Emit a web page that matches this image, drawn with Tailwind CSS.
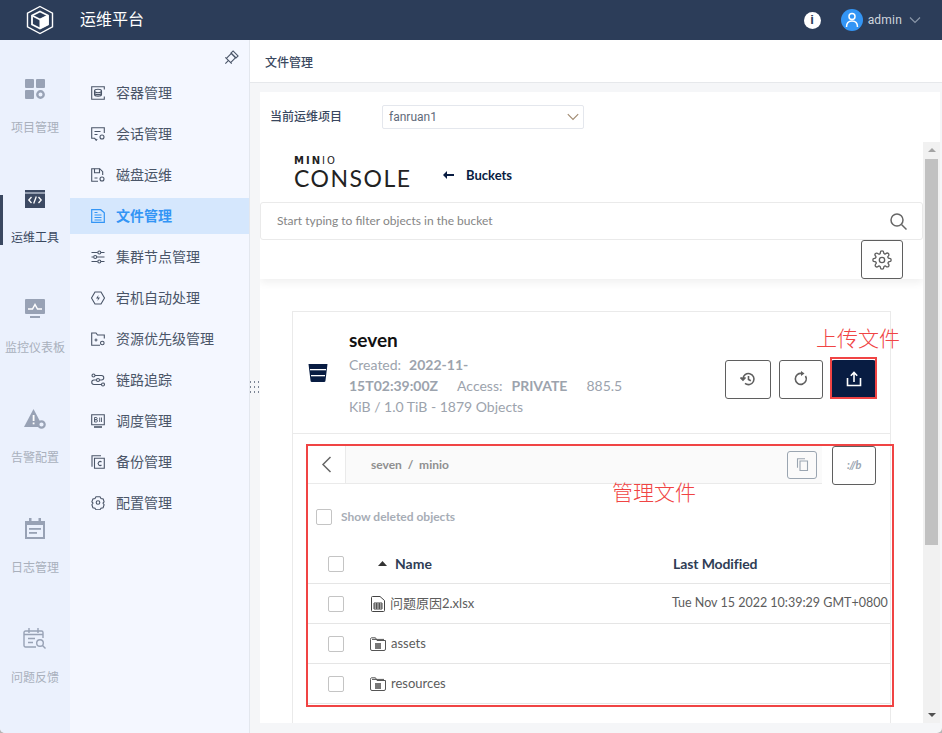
<!DOCTYPE html>
<html lang="zh-CN" class="bg-[#b5b5b5]">
<head>
  <meta charset="UTF-8" />
  <meta name="viewport" content="width=device-width, initial-scale=1.0"/>
  <title>运维平台</title>
  <script src="https://cdn.jsdelivr.net/npm/@tailwindcss/browser@4"></script>
</head>
<body class="relative h-[733px] w-[942px] overflow-hidden rounded-b-[5px] bg-[#f5f6f8] font-['Roboto','Noto_Sans_CJK_SC',sans-serif]">

  <!-- top bar -->
  <header class="flex h-10 items-center bg-[#2c3d59] text-white">
    <svg class="ml-[26px] h-[30px] w-[28px]" viewBox="0 0 28 30" fill="none" stroke="#fff">
      <path d="M14 1.500 26.500 8.200v13.600L14 28.500 1.500 21.800V8.200z" stroke-width="1.400"/>
      <path d="M14 6.500 22 10.500v9L14 23.500 6 19.500v-9z" stroke-width="1.800"/>
      <path d="M6 10.500 14 14.500 22 10.500" stroke-width="1.600"/>
      <path d="M14 14.500 22 10.500v9L14 23.500z" fill="#fff"/>
    </svg>
    <span class="ml-[26px] text-base">运维平台</span>
    <div class="ml-auto flex items-center">
      <span class="flex h-[17px] w-[17px] items-center justify-center rounded-full bg-white font-['Liberation_Sans'] text-[13px] font-bold text-[#2c3d59]">i</span>
      <span class="ml-[20px] flex h-[22px] w-[22px] items-center justify-center rounded-full bg-[#3395f5]">
        <svg class="h-4 w-4" viewBox="0 0 16 16" fill="none" stroke="#fff" stroke-width="1.500"><circle cx="8" cy="4.500" r="3"/><path d="M2.500 15c0-4 2.200-6 5.500-6s5.500 2 5.500 6"/></svg>
      </span>
      <span class="ml-[5px] text-xs tracking-[0.2px] text-[#cfd5de]">admin</span>
      <svg class="ml-[7px] mr-[21px] h-2 w-3" viewBox="0 0 12 8" fill="none" stroke="#8a96a8" stroke-width="1.200"><path d="M1 1.500 6 6.500l5-5"/></svg>
    </div>
  </header>

  <div class="flex h-[693px]">
    <!-- icon rail -->
    <nav class="relative flex w-[70px] shrink-0 flex-col items-center bg-[#ebf1fd] pt-[38px] text-xs text-[#a9b0bc]">
      <span class="absolute left-0 top-[155px] h-[50px] w-[3px] bg-[#3a4860]"></span>

      <div class="flex h-[110px] shrink-0 flex-col items-center">
        <svg class="h-[22px] w-[22px]" viewBox="0 0 22 22" fill="#98a2b5"><rect x="1" y="1" width="9" height="9" rx="1"/><rect x="12" y="1" width="9" height="9" rx="1"/><rect x="1" y="12" width="9" height="9" rx="1"/><circle cx="16.500" cy="16.500" r="3.200" fill="none" stroke="#98a2b5" stroke-width="2.400"/></svg>
        <span class="mt-[20px]">项目管理</span>
      </div>
      <div class="flex h-[110px] shrink-0 flex-col items-center text-[#3a4860]">
        <svg class="h-[22px] w-[22px]" viewBox="0 0 22 22"><rect x="1" y="2" width="20" height="18" fill="#3d4a63"/><rect x="1" y="4.500" width="20" height="1" fill="#ebf1fd"/><path d="M7.500 9 4.800 12l2.700 3M14.500 9l2.700 3-2.700 3M12.300 8.500l-2.600 7" fill="none" stroke="#fff" stroke-width="1.300"/></svg>
        <span class="mt-[20px]">运维工具</span>
      </div>
      <div class="flex h-[110px] shrink-0 flex-col items-center">
        <svg class="h-[22px] w-[22px]" viewBox="0 0 22 22"><rect x="1" y="1" width="20" height="15" rx="1" fill="#98a2b5"/><path d="M4 11h4.500L11 6.500l2.500 4.500H18" fill="none" stroke="#fff" stroke-width="1.500"/><rect x="6" y="18" width="10" height="2" fill="#98a2b5"/></svg>
        <span class="mt-[20px]">监控仪表板</span>
      </div>
      <div class="flex h-[110px] shrink-0 flex-col items-center">
        <svg class="h-[22px] w-[24px]" viewBox="0 0 24 22"><path d="M10.500 1 20 19H1z" fill="#98a2b5"/><rect x="9.700" y="7" width="1.800" height="6" fill="#fff"/><rect x="9.700" y="14.500" width="1.800" height="1.800" fill="#fff"/><circle cx="18.500" cy="16.500" r="3.200" fill="#ebf1fd" stroke="#98a2b5" stroke-width="2.200"/></svg>
        <span class="mt-[20px]">告警配置</span>
      </div>
      <div class="flex h-[110px] shrink-0 flex-col items-center">
        <svg class="h-[22px] w-[22px]" viewBox="0 0 22 22"><path d="M1 3h20v18H1z" fill="#98a2b5"/><rect x="5" y="0" width="2.500" height="4" fill="#98a2b5"/><rect x="14.500" y="0" width="2.500" height="4" fill="#98a2b5"/><rect x="3" y="7" width="16" height="12" fill="#ebf1fd"/><rect x="5" y="10" width="12" height="1.800" fill="#98a2b5"/><rect x="5" y="14" width="8" height="1.800" fill="#98a2b5"/></svg>
        <span class="mt-[20px]">日志管理</span>
      </div>
      <div class="flex h-[110px] shrink-0 flex-col items-center">
        <svg class="h-[22px] w-[24px]" viewBox="0 0 24 22" fill="none" stroke="#98a2b5" stroke-width="1.400"><path d="M13 19H2.500A1.500 1.500 0 0 1 1 17.500V4.500A1.500 1.500 0 0 1 2.500 3h16A1.500 1.500 0 0 1 20 4.500V10"/><path d="M6 0v5M15 0v5M1 6.500h19M5 10.500h7M5 14.500h5"/><circle cx="17" cy="15" r="3.300"/><path d="m19.500 17.500 3 3"/></svg>
        <span class="mt-[20px]">问题反馈</span>
      </div>
    </nav>

    <!-- sub menu -->
    <aside class="relative w-[180px] shrink-0 border-r border-[#e3e7ee] bg-[#f4f7ff] pt-[35px] text-sm text-[#4a5568]">
      <svg class="absolute left-[153px] top-[10px] h-4 w-4" viewBox="0 0 16 16" fill="none" stroke="#4a5568" stroke-width="1.100"><g transform="rotate(45 8 8)"><path d="M4.500 4.500h7M5 4.500v7M11 4.500v7M3.500 11.500h9M8 11.500V16"/><path d="M4.500 1.500h7v3h-7z"/></g></svg>

      <ul class="flex flex-col gap-[5px]">
        <li class="flex h-9 items-center pl-[21px]">
          <svg class="mr-[11px] h-[14px] w-[14px]" viewBox="0 0 14 14" fill="none" stroke="#4a5568" stroke-width="1.100"><path d="M13.300 3.500V.7H.7v12.600h12.600v-2.800"/><ellipse cx="7" cy="5" rx="3.500" ry="1.700"/><path d="M3.500 5v3.500C3.500 9.500 5 10.200 7 10.200s3.500-.7 3.500-1.700V5M3.500 7c0 1 1.500 1.600 3.500 1.600S10.500 8 10.500 7"/></svg>
          容器管理
        </li>
        <li class="flex h-9 items-center pl-[21px]">
          <svg class="mr-[11px] h-[14px] w-[14px]" viewBox="0 0 14 14" fill="none" stroke="#4a5568" stroke-width="1.100"><path d="M13.300 6V.7H.7v10.600h3l1.500 2 1-1.300"/><path d="M3.500 4.500h6M3.500 7.500h3"/><circle cx="11" cy="10" r="2"/></svg>
          会话管理
        </li>
        <li class="flex h-9 items-center pl-[21px]">
          <svg class="mr-[11px] h-[14px] w-[14px]" viewBox="0 0 14 14" fill="none" stroke="#4a5568" stroke-width="1.100"><path d="M7 13.300H.7V.7h8l3 3V7"/><path d="M3.500 .7v4h5v-4M3.500 10h3"/><circle cx="11" cy="11" r="2"/></svg>
          磁盘运维
        </li>
        <li class="flex h-9 items-center bg-[#d5e7fd] pl-[21px] font-bold text-[#3395f5]">
          <svg class="mr-[11px] h-[14px] w-[14px]" viewBox="0 0 14 14" fill="none" stroke="#3395f5" stroke-width="1.200"><path d="M.7.7h9l3.600 3v9.600H.7z"/><path d="M3.500 6h7M3.500 8.500h7M3.500 11h7M3.500 3.500h3"/></svg>
          文件管理
        </li>
        <li class="flex h-9 items-center pl-[21px]">
          <svg class="mr-[11px] h-[14px] w-[14px]" viewBox="0 0 14 14" fill="none" stroke="#4a5568" stroke-width="1.100"><path d="M.5 2.500h6M10 2.500h3.500M.5 7h2M6 7h7.500M.5 11.500h6M10 11.500h3.500"/><circle cx="8.300" cy="2.500" r="1.500"/><circle cx="4.200" cy="7" r="1.500"/><circle cx="8.300" cy="11.500" r="1.500"/></svg>
          集群节点管理
        </li>
        <li class="flex h-9 items-center pl-[21px]">
          <svg class="mr-[11px] h-[14px] w-[14px]" viewBox="0 0 14 14" fill="none" stroke="#4a5568" stroke-width="1.100"><path d="M4 1h6l3.500 6-3.500 6H4L.5 7z"/><path d="M7.500 4 5 7.500h2l-.5 2.500L9 6.500H7z" fill="#4a5568" stroke="none"/></svg>
          宕机自动处理
        </li>
        <li class="flex h-9 items-center pl-[21px]">
          <svg class="mr-[11px] h-[14px] w-[14px]" viewBox="0 0 14 14" fill="none" stroke="#4a5568" stroke-width="1.100"><path d="M13.300 6.500V3H6.500L5 1H.7v12.300H9"/><circle cx="11.300" cy="11" r="1.800"/><path d="M3.500 8h3M5 6.500v3"/></svg>
          资源优先级管理
        </li>
        <li class="flex h-9 items-center pl-[21px]">
          <svg class="mr-[11px] h-[14px] w-[14px]" viewBox="0 0 14 14" fill="none" stroke="#4a5568" stroke-width="1.100"><circle cx="2.500" cy="2.500" r="1.500"/><circle cx="7" cy="7" r="1.500"/><circle cx="12" cy="11.500" r="1.500"/><path d="M4 2.500h6.500a2.200 2.200 0 0 1 0 4.500h-2M5.500 7H3a2.200 2.200 0 0 0 0 4.500h7.500"/></svg>
          链路追踪
        </li>
        <li class="flex h-9 items-center pl-[21px]">
          <svg class="mr-[11px] h-[14px] w-[14px]" viewBox="0 0 14 14" fill="none" stroke="#4a5568"><path d="M.7.7h12.600v10H.7z" stroke-width="1.100"/><path d="M3 13h8" stroke-width="1.600"/><path d="M3.500 3.500v4.500h1.800a1.100 1.100 0 0 0 0-2.300H3.500h1.600a1.100 1.100 0 0 0 0-2.200zM8.700 3.500v4.500M10.500 3.500v4.500" stroke-width=".9"/></svg>
          调度管理
        </li>
        <li class="flex h-9 items-center pl-[21px]">
          <svg class="mr-[11px] h-[14px] w-[14px]" viewBox="0 0 14 14" fill="none" stroke="#4a5568" stroke-width="1.100"><path d="M10 .7H1v11"/><path d="M3.500 3.200h9.800v10H3.500z"/><path d="M10.500 7a2 2 0 1 0 0 3"/></svg>
          备份管理
        </li>
        <li class="flex h-9 items-center pl-[21px]">
          <svg class="mr-[11px] h-[14px] w-[14px]" viewBox="0 0 14 14" fill="none" stroke="#4a5568" stroke-width="1.100"><path d="M5 .8h4l1 1.700 2.200.4.900 3L12 7l1.100 1.800-1 2.900-2.100.5-1 1.500H5l-1-1.500-2.100-.5-1-2.900L2 7 .9 5.900l1-3L4 2.500z"/><circle cx="7" cy="6.500" r="1.800"/></svg>
          配置管理
        </li>
      </ul>
    </aside>

    <!-- main -->
    <main class="relative flex min-w-0 flex-1 flex-col">
      <div class="flex h-[43px] shrink-0 items-center border-b border-[#e6e8eb] bg-white pl-[15px] pt-[3px] text-xs font-medium text-[#3a4860]">文件管理</div>

      <section class="ml-[10px] mr-[2px] mt-[9px] flex h-[631px] flex-col bg-white">
        <div class="flex h-[50px] shrink-0 items-center pl-[10px] text-xs">
          <span class="w-[112px] font-medium text-[#3a4860]">当前运维项目</span>
          <div class="flex h-6 w-[202px] items-center justify-between rounded-[2px] border border-[#e4e7ed] pl-[6px] pr-[4px] text-[#5f6a7a]">
            fanruan1
            <svg class="h-2 w-3" viewBox="0 0 12 8" fill="none" stroke="#a08a70" stroke-width="1.100"><path d="M.8 1.200 6 6.500l5.200-5.300"/></svg>
          </div>
        </div>

        <div class="flex min-h-0 flex-1">
          <!-- embedded minio console -->
          <div class="relative min-w-0 flex-1 overflow-hidden font-['Lato','Noto_Sans_CJK_SC',sans-serif]">
            <div class="relative h-[137px] shadow-[0_4px_8px_rgba(0,0,0,0.06)]">
              <div class="flex h-[60px] items-center pl-[34px]">
                <div class="flex w-[120px] flex-col text-[#222]">
                  <span class="h-[9px] whitespace-nowrap font-['DejaVu_Sans'] text-[10px] leading-[9px] tracking-[2px]"><b>MIN</b>IO</span>
                  <span class="mt-[2px] h-[22px] whitespace-nowrap text-[23px] font-normal leading-[22px] tracking-[1.500px]">CONSOLE</span>
                </div>
                <svg class="ml-[29px] mt-[6px] h-2 w-[11px]" viewBox="0 0 11 8" fill="#081c42"><path d="M4 0v3h7v2H4v3L0 4z"/></svg>
                <span class="ml-[12px] mt-[7px] text-[13px] font-bold text-[#081c42]">Buckets</span>
              </div>
              <div class="flex h-[38px] items-center justify-between rounded-[3px] border border-[#eaeaea] pl-4 pr-[15px] text-xs text-[#858585]">
                Start typing to filter objects in the bucket
                <svg class="h-[17px] w-[17px]" viewBox="0 0 17 17" fill="none" stroke="#666" stroke-width="1.500"><circle cx="7" cy="7" r="6"/><path d="m11.500 11.500 5 5"/></svg>
              </div>
              <div class="flex justify-end pr-5">
                <button class="flex h-[39px] w-[42px] items-center justify-center rounded-[3px] border border-[#5f5f5f]">
                  <svg class="h-5 w-5" viewBox="0 0 24 24" fill="none" stroke="#5f5f5f" stroke-width="1.600"><circle cx="12" cy="12" r="3.200"/><path d="M19.400 15a1.650 1.650 0 0 0 .33 1.820l.06.06a2 2 0 1 1-2.830 2.830l-.06-.06a1.650 1.650 0 0 0-2.800 1.170V21a2 2 0 0 1-4 0v-.09a1.650 1.650 0 0 0-2.800-1.170l-.06.06a2 2 0 1 1-2.830-2.830l.06-.06A1.650 1.650 0 0 0 3.090 14H3a2 2 0 0 1 0-4h.09a1.650 1.650 0 0 0 1.170-2.800l-.06-.06a2 2 0 1 1 2.830-2.830l.06.06A1.650 1.650 0 0 0 10 3.090V3a2 2 0 0 1 4 0v.09a1.650 1.650 0 0 0 2.800 1.170l.06-.06a2 2 0 1 1 2.830 2.830l-.06.06A1.650 1.650 0 0 0 20.910 10H21a2 2 0 0 1 0 4h-.09a1.650 1.650 0 0 0-1.510 1z"/></svg>
                </button>
              </div>
            </div>

            <!-- bucket card -->
            <div class="ml-[32px] mr-[32px] mt-[32px] h-[500px] border border-[#eaeaea]">
              <div class="flex h-[122px] items-center border-b border-[#eaeaea]">
                <svg class="ml-[15px] h-5 w-5" viewBox="0 0 20 20"><path d="M.5 1h19l-2 16.500a1.500 1.500 0 0 1-1.500 1.500H4a1.500 1.500 0 0 1-1.500-1.500z" fill="#081c42"/><rect x="2" y="6" width="16" height="1.300" fill="#fff"/><rect x="3" y="12" width="14" height="1.300" fill="#fff"/></svg>
                <div class="ml-[21px] w-[280px] whitespace-nowrap text-sm font-normal leading-[21px] text-[#9ca3ad]">
                  <div class="mb-[2px] text-[19px] font-bold leading-[24px] text-[#111]">seven</div>
                  <div>Created:<b class="ml-2">2022-11-</b></div>
                  <div><b>15T02:39:00Z</b><span class="ml-[19px]">Access:</span><b class="ml-[9px]">PRIVATE</b><span class="ml-[19px]">885.5</span></div>
                  <div>KiB / 1.0 TiB - 1879 Objects</div>
                </div>
                <div class="ml-[96px] mt-[13px] flex items-center gap-2">
                  <button class="flex h-[39px] w-[46px] items-center justify-center rounded-[3px] border border-[#5f5f5f]">
                    <svg class="h-4 w-4" viewBox="0 0 16 16" fill="none" stroke="#5f5f5f" stroke-width="1.600"><path d="M3 8a5.500 5.500 0 1 1 2 4.300"/><path d="M.5 6.500 3 9l2.500-2.500" fill="#5f5f5f"/><path d="M8.500 5v3.500l2.300 1.300"/></svg>
                  </button>
                  <button class="flex h-[39px] w-[44px] items-center justify-center rounded-[3px] border border-[#5f5f5f]">
                    <svg class="h-4 w-4" viewBox="0 0 16 16" fill="none" stroke="#5f5f5f" stroke-width="1.600"><path d="M12.500 5a5.500 5.500 0 1 1-3.500-2.500"/><path d="M8 0v5l3.500-2.500z" fill="#5f5f5f" stroke="none"/></svg>
                  </button>
                  <button class="flex h-[39px] w-[45px] items-center justify-center rounded-[3px] bg-[#081c42]">
                    <svg class="h-4 w-4" viewBox="0 0 16 16" fill="none" stroke="#fff" stroke-width="1.600"><path d="M1.500 7v7.500h13V7M8 11V2M4.800 4.800 8 1.500l3.200 3.300"/></svg>
                  </button>
                </div>
              </div>

              <div class="relative pl-[14px]">
                <div class="flex items-start pt-3">
                  <div class="flex h-[38px] w-[515px] items-center border-b border-[#eaeaea] bg-[#fafafa]">
                    <span class="flex h-full w-[39px] items-center justify-center border-r border-[#eaeaea] bg-white">
                      <svg class="h-[17px] w-[11px]" viewBox="0 0 11 17" fill="none" stroke="#666" stroke-width="1.500"><path d="M9.500 1 2 8.500 9.500 16"/></svg>
                    </span>
                    <span class="ml-[25px] text-xs font-bold text-[#8f8f8f]">seven&nbsp; / &nbsp;minio</span>
                    <span class="ml-auto mr-[5px] flex h-7 w-[30px] items-center justify-center rounded-[3px] border border-[#9aa5b1]">
                      <svg class="h-[13px] w-[13px]" viewBox="0 0 13 13" fill="none" stroke="#9aa5b1" stroke-width="1.100"><path d="M9 .7H1.500v9"/><path d="M4 3h7.500v9.500H4z"/></svg>
                    </span>
                  </div>
                  <button class="ml-[10px] flex h-[39px] w-11 items-center justify-center rounded-[3px] border border-[#5f5f5f] text-[11px] font-bold italic tracking-[-0.5px] text-[#9aa5b1]">://b</button>
                </div>

                <label class="mt-[24px] flex items-center pl-[9px] text-xs font-bold text-[#a7adb6]">
                  <span class="mr-[9px] h-4 w-4 rounded-[2px] border border-[#c4c4c4]"></span>
                  Show deleted objects
                </label>

                <div class="mt-[19px] flex h-[40px] items-center border-b border-[#e5e5e5] text-sm font-bold text-[#2f3d55]">
                  <span class="ml-[21px] h-4 w-4 rounded-[2px] border border-[#c4c4c4]"></span>
                  <svg class="ml-[34px] h-[5px] w-[9px]" viewBox="0 0 9 5" fill="#333"><path d="M4.500 0 9 5H0z"/></svg>
                  <span class="ml-[8px] w-[278px]">Name</span>
                  <span class="tracking-[-0.1px]">Last Modified</span>
                </div>
                <div class="flex h-10 items-center overflow-hidden whitespace-nowrap border-b border-[#e5e5e5] text-[13px] text-[#5c5c5c]">
                  <span class="ml-[21px] h-4 w-4 shrink-0 rounded-[2px] border border-[#c4c4c4]"></span>
                  <svg class="ml-[27px] h-4 w-[14px] shrink-0" viewBox="0 0 14 16" fill="none" stroke="#444" stroke-width="1"><path d="M.5 1.500a1 1 0 0 1 1-1H9l4.500 4v10a1 1 0 0 1-1 1h-11a1 1 0 0 1-1-1z"/><path d="M3 7h8v6H3zM3 9h8M3 11h8M5.700 7v6M8.300 7v6"/></svg>
                  <span class="ml-[5px] w-[282px] shrink-0">问题原因2.xlsx</span>
                  <span class="text-[12.500px]">Tue Nov 15 2022 10:39:29 GMT+0800</span>
                </div>
                <div class="flex h-10 items-center border-b border-[#e5e5e5] text-[13px] text-[#5c5c5c]">
                  <span class="ml-[21px] h-4 w-4 rounded-[2px] border border-[#c4c4c4]"></span>
                  <svg class="ml-[26px] h-[14px] w-[16px]" viewBox="0 0 16 14" fill="none" stroke="#555" stroke-width="1"><path d="M.5 3V12a1.500 1.500 0 0 0 1.500 1.500h12a1.500 1.500 0 0 0 1.500-1.500V3.500H7L5.500.8H2A1.500 1.500 0 0 0 .5 3z"/><path d="M2 2.400h12" /><rect x="5" y="6" width="6" height="6" fill="#777" stroke="none"/></svg>
                  <span class="ml-[5px]">assets</span>
                </div>
                <div class="flex h-10 items-center border-b border-[#e5e5e5] text-[13px] text-[#5c5c5c]">
                  <span class="ml-[21px] h-4 w-4 rounded-[2px] border border-[#c4c4c4]"></span>
                  <svg class="ml-[26px] h-[14px] w-[16px]" viewBox="0 0 16 14" fill="none" stroke="#555" stroke-width="1"><path d="M.5 3V12a1.500 1.500 0 0 0 1.500 1.500h12a1.500 1.500 0 0 0 1.500-1.500V3.500H7L5.500.8H2A1.500 1.500 0 0 0 .5 3z"/><path d="M2 2.400h12" /><rect x="5" y="6" width="6" height="6" fill="#777" stroke="none"/></svg>
                  <span class="ml-[5px]">resources</span>
                </div>
              </div>
            </div>
          </div>

          <!-- scrollbar -->
          <div class="flex w-[17px] shrink-0 flex-col items-center bg-[#f1f1f1]">
            <svg class="mt-[6px] h-1 w-2" viewBox="0 0 8 4" fill="#a3a3a3"><path d="M4 0 8 4H0z"/></svg>
            <span class="mt-[7px] h-[386px] w-[13px] bg-[#c1c1c1]"></span>
            <svg class="mb-[6px] mt-auto h-1 w-2" viewBox="0 0 8 4" fill="#505050"><path d="M4 4 8 0H0z"/></svg>
          </div>
        </div>
      </section>
    </main>
  </div>

  <!-- resize handle -->
  <svg class="absolute left-[250px] top-[380px] h-[14px] w-[10px]" viewBox="0 0 10 14" fill="#7b8494"><rect x="0" y="1" width="1" height="2"/><rect x="0" y="6" width="1" height="2"/><rect x="0" y="11" width="1" height="2"/><rect x="8" y="1" width="1" height="2"/><rect x="8" y="6" width="1" height="2"/><rect x="8" y="11" width="1" height="2"/><rect x="4" y="1" width="1" height="2"/><rect x="4" y="6" width="1" height="2"/><rect x="4" y="11" width="1" height="2"/></svg>

  <!-- red annotations drawn on the screenshot -->
  <div class="absolute left-[830px] top-[357px] h-[42px] w-[47px] border-2 border-[#f04444]"></div>
  <div class="absolute left-[306px] top-[444px] h-[263px] w-[588px] border-2 border-[#f04444]"></div>
  <span class="absolute left-[816px] top-[324px] text-[21px] font-light text-[#f04444]">上传文件</span>
  <span class="absolute left-[612px] top-[478px] text-[21px] font-light text-[#f04444]">管理文件</span>
</body>
</html>
